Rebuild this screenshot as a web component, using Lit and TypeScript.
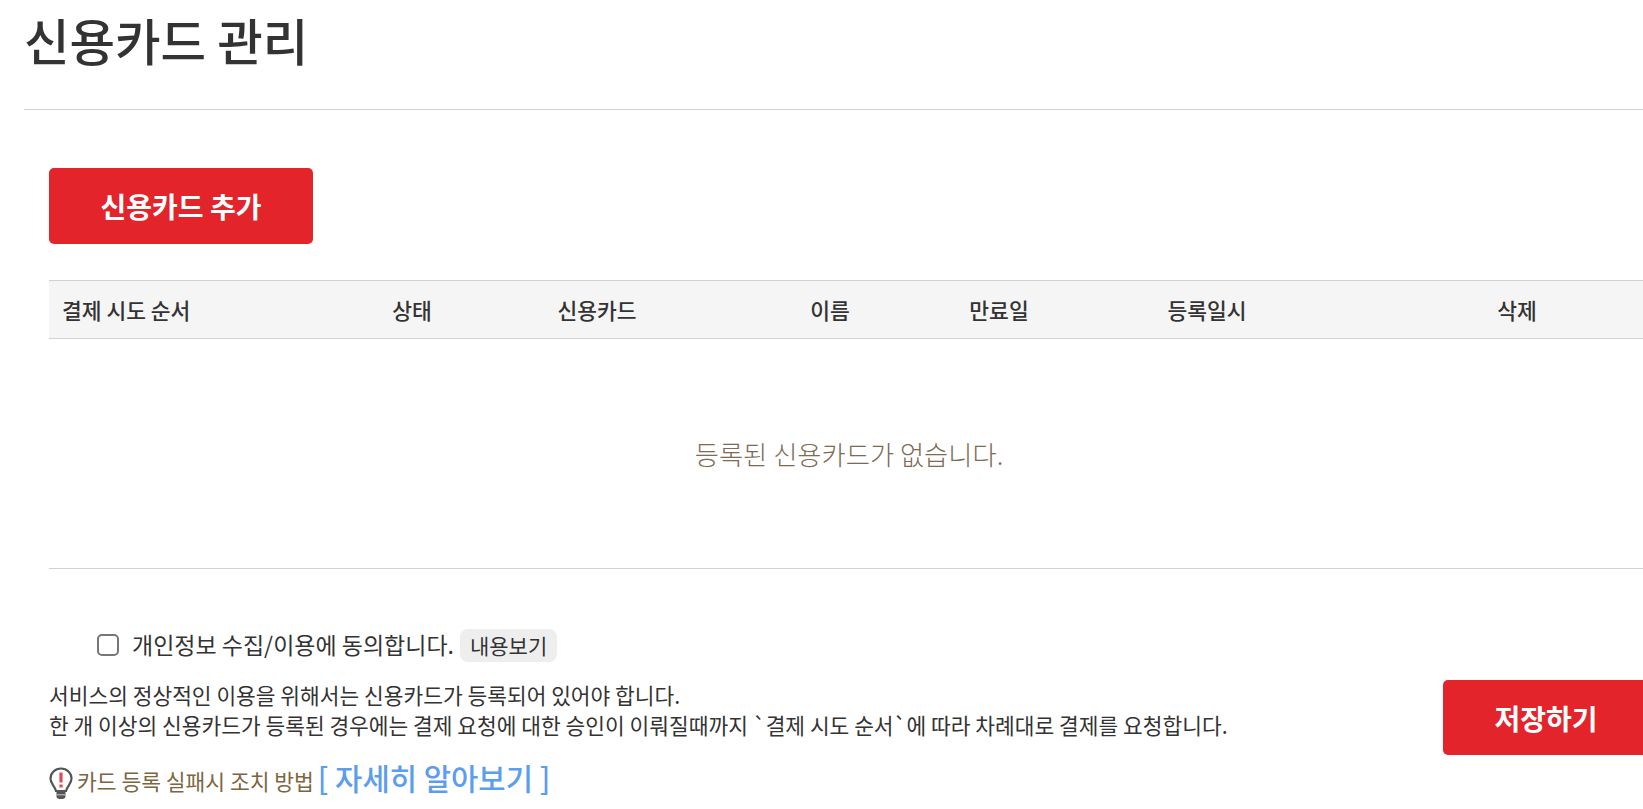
import { LitElement, css, html } from "lit";
import { customElement } from "lit/decorators.js";

const columns = [
  "결제 시도 순서",
  "상태",
  "신용카드",
  "이름",
  "만료일",
  "등록일시",
  "삭제",
];

@customElement("app-root")
export class AppRoot extends LitElement {
  static styles = css`
    :host {
      display: block;
      width: 1643px;
      height: 809px;
      overflow: hidden;
      background: #fff;
      color: #333;
      font-family: "Noto Sans CJK KR", "Noto Sans", sans-serif;
    }

    .page {
      width: 1624px;
      margin-left: 24px;
    }

    .title {
      margin: 0;
      height: 109px;
      box-sizing: border-box;
      font-size: 49.5px;
      font-weight: 500;
      line-height: 80px;
      color: #333;
    }

    .rule {
      height: 1px;
      background: #d2d2d2;
    }

    .content {
      width: 1600px;
      margin-left: 25px;
      padding-top: 58px;
    }

    .btn {
      display: flex;
      align-items: center;
      justify-content: center;
      border: 0;
      border-radius: 5px;
      background: #e3242b;
      color: #fff;
      font-family: inherit;
      font-weight: 700;
      padding: 0;
    }

    .add {
      width: 264px;
      height: 76px;
      font-size: 28px;
    }

    .head {
      display: grid;
      grid-template-columns: 272px 182px 188px 278px 60px 356px 264px;
      height: 59px;
      margin-top: 36px;
      box-sizing: border-box;
      align-items: center;
      background: #f5f5f5;
      border-top: 1px solid #d2d2d2;
      border-bottom: 1px solid #d2d2d2;
      font-size: 21.5px;
      font-weight: 500;
      white-space: nowrap;
    }

    .head span {
      text-align: center;
    }

    .head span:first-child {
      text-align: left;
      padding-left: 13px;
    }

    .empty {
      display: flex;
      align-items: center;
      justify-content: center;
      height: 230px;
      box-sizing: border-box;
      border-bottom: 1px solid #d2d2d2;
      font-size: 26.3px;
      font-weight: 300;
      color: #7d6b55;
    }

    .agree {
      display: flex;
      align-items: center;
      height: 34px;
      margin-top: 59px;
      padding-left: 48px;
      font-size: 23px;
    }

    .agree-text {
      margin-bottom: 3px;
    }

    .box {
      width: 22px;
      height: 22px;
      box-sizing: border-box;
      border: 2px solid #767676;
      border-radius: 5px;
      margin-right: 13px;
    }

    .view {
      display: flex;
      align-items: center;
      height: 33px;
      margin-left: 6px;
      padding: 0 10px;
      border-radius: 8px;
      background: #eee;
      font-size: 21px;
    }

    .bottom {
      display: flex;
      justify-content: space-between;
      align-items: flex-start;
    }

    .notes {
      margin-top: 18px;
      font-size: 21.45px;
      line-height: 30px;
    }

    .save {
      width: 206px;
      height: 75px;
      margin-top: 18px;
      font-size: 28px;
    }

    .help {
      display: flex;
      align-items: flex-start;
      margin-top: 19px;
      color: #7d6540;
      font-size: 21.5px;
      line-height: 40px;
    }

    .help svg {
      width: 24px;
      height: 33px;
      margin-top: 8px;
      margin-right: 4px;
    }

    .help-text {
      margin-top: 2px;
    }

    .help a {
      margin-left: 4px;
      margin-top: -1px;
      color: #5c9ded;
      font-size: 29.7px;
      font-weight: 500;
    }
  `;

  render() {
    return html`<div class="page">
      <h1 class="title">신용카드 관리</h1>
      <div class="rule"></div>
      <div class="content">
        <button class="btn add">신용카드 추가</button>
        <div class="head">${columns.map((c) => html`<span>${c}</span>`)}</div>
        <div class="empty">등록된 신용카드가 없습니다.</div>
        <div class="agree">
          <span class="box"></span>
          <span class="agree-text">개인정보 수집/이용에 동의합니다.</span>
          <span class="view">내용보기</span>
        </div>
        <div class="bottom">
          <div>
            <div class="notes">
              서비스의 정상적인 이용을 위해서는 신용카드가 등록되어 있어야 합니다.<br />
              한 개 이상의 신용카드가 등록된 경우에는 결제 요청에 대한 승인이 이뤄질때까지 \`결제 시도 순서\`에 따라 차례대로 결제를 요청합니다.
            </div>
            <div class="help">
              <svg viewBox="0 0 24 33" fill="none">
                <path
                  d="M12 1.500C6 1.500 1.500 6 1.500 11.500c0 5.500 4.500 7.500 5.500 12.500h10c1-5 5.500-7 5.500-12.500C22.500 6 18 1.500 12 1.500z"
                  stroke="#555"
                  stroke-width="2.200"
                />
                <path d="M7.500 25h9v5q-1 2-3 2h-3q-2 0-3-2z" fill="#555" />
                <path d="M7.500 27.800h9" stroke="#ccc" stroke-width="1" />
                <path d="M12 5.500v10" stroke="#df4a58" stroke-width="3.200" />
                <path d="M12 17.500v3" stroke="#df4a58" stroke-width="3.200" />
              </svg>
              <span class="help-text">카드 등록 실패시 조치 방법</span>
              <a>[ 자세히 알아보기 ]</a>
            </div>
          </div>
          <button class="btn save">저장하기</button>
        </div>
      </div>
    </div>`;
  }
}
